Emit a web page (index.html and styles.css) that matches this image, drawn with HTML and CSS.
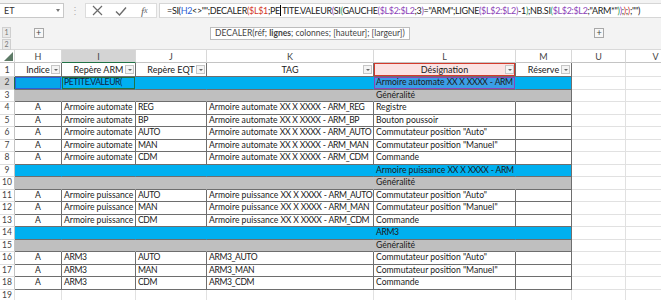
FILE: index.html
```html
<!DOCTYPE html>
<html lang="fr">
<head>
    <meta charset="UTF-8">
    <meta name="viewport" content="width=device-width, initial-scale=1.0">
    <title>Classeur</title>
    <link rel="stylesheet" href="styles.css">
</head>
<body>
    <div class="bar">
        <div class="namebox"><span>ET</span><span class="caret"></span></div>
        <div class="grip">⋮</div>
        <div class="fbtns">
            <span class="fbtn"><svg width="11" height="11" viewBox="0 0 11 11"><path d="M1 1L10 10M10 1L1 10" stroke="#6b6b6b" stroke-width="1.2" fill="none"/></svg></span>
            <span class="fbtn"><svg width="12" height="10" viewBox="0 0 12 10"><path d="M1 5.5L4.5 9L11 1.5" stroke="#6b6b6b" stroke-width="1.4" fill="none"/></svg></span>
            <span class="fbtn fx">f<small>x</small></span>
        </div>
        <div class="formula">=SI(<span class="r1">H2</span>&lt;&gt;"";DECALER<span class="p2">(</span><span class="r2">$L$1</span>;PE<span class="cursor"></span>TITE.VALEUR<span class="p3">(</span>SI<span class="p4">(</span>GAUCHE<span class="p3">(</span><span class="r3">$L$2:$L2</span>;3<span class="p3">)</span>="ARM";LIGNE<span class="p3">(</span><span class="r3">$L$2:$L2</span><span class="p3">)</span>-1<span class="p4">)</span>;NB.SI<span class="p4">(</span><span class="r3">$L$2:$L2</span>;"ARM*"<span class="p4">)</span><span class="p3">)</span>;<span class="p2">)</span>;<span class="p2">)</span>;"")</div>
    </div>

    <div class="outline">
        <div class="levels"><span class="lvl">1</span><span class="lvl">2</span></div>
        <div class="grp wh"><span class="plus">+</span></div>
        <div class="grp gap"></div>
        <div class="grp wu"><span class="plus">+</span></div>
        <div class="tip">DECALER(réf; <b>lignes</b>; colonnes; [hauteur]; [largeur])</div>
    </div>

    <table class="sheet">
        <colgroup>
            <col class="c-row"><col class="c-h"><col class="c-i"><col class="c-j"><col class="c-k"><col class="c-l"><col class="c-m"><col class="c-u"><col class="c-v">
        </colgroup>
        <thead>
            <tr>
                <th class="corner"><svg width="9" height="9" viewBox="0 0 9 9"><path d="M9 0V9H0Z" fill="#5d7a66"/></svg></th>
                <th>H</th><th class="sel">I</th><th>J</th><th>K</th><th>L</th><th>M</th><th>U</th><th>V</th>
            </tr>
        </thead>
        <tbody>
            <tr class="head">
                <td class="rh">1</td>
                <td><div class="hd"><span>Indice</span><i class="dd"></i></div></td>
                <td><div class="hd"><span>Repère ARM</span><i class="dd"></i></div></td>
                <td><div class="hd"><span>Repère EQT</span><i class="dd"></i></div></td>
                <td><div class="hd"><span>TAG</span><i class="dd"></i></div></td>
                <td class="ref-red"><div class="hd"><span>Désignation</span><i class="dd"></i></div></td>
                <td class="last"><div class="hd"><span>Réserve</span><i class="dd"></i></div></td>
                <td class="g"></td><td class="g"></td>
            </tr>
            <tr class="blue">
                <td class="rh sel">2</td>
                <td class="ref-blue"></td>
                <td class="active"><span class="cap">PETITE.VALEUR(</span></td>
                <td></td><td></td>
                <td class="ref-purple">Armoire automate <span class="cap">XX X XXXX - ARM</span></td>
                <td class="last"></td>
                <td class="g"></td><td class="g"></td>
            </tr>
            <tr class="grey">
                <td class="rh">3</td>
                <td></td><td></td><td></td><td></td><td>Généralité</td><td class="last"></td>
                <td class="g"></td><td class="g"></td>
            </tr>
            <tr class="data">
                <td class="rh">4</td>
                <td class="ctr">A</td><td>Armoire automate</td><td><span class="cap">REG</span></td><td>Armoire automate <span class="cap">XX X XXXX - ARM_REG</span></td><td>Registre</td><td></td>
                <td class="g"></td><td class="g"></td>
            </tr>
            <tr class="data">
                <td class="rh">5</td>
                <td class="ctr">A</td><td>Armoire automate</td><td><span class="cap">BP</span></td><td>Armoire automate <span class="cap">XX X XXXX - ARM_BP</span></td><td>Bouton poussoir</td><td></td>
                <td class="g"></td><td class="g"></td>
            </tr>
            <tr class="data">
                <td class="rh">6</td>
                <td class="ctr">A</td><td>Armoire automate</td><td><span class="cap">AUTO</span></td><td>Armoire automate <span class="cap">XX X XXXX - ARM_AUTO</span></td><td>Commutateur position "Auto"</td><td></td>
                <td class="g"></td><td class="g"></td>
            </tr>
            <tr class="data">
                <td class="rh">7</td>
                <td class="ctr">A</td><td>Armoire automate</td><td><span class="cap">MAN</span></td><td>Armoire automate <span class="cap">XX X XXXX - ARM_MAN</span></td><td>Commutateur position "Manuel"</td><td></td>
                <td class="g"></td><td class="g"></td>
            </tr>
            <tr class="data">
                <td class="rh">8</td>
                <td class="ctr">A</td><td>Armoire automate</td><td><span class="cap">CDM</span></td><td>Armoire automate <span class="cap">XX X XXXX - ARM_CDM</span></td><td>Commande</td><td></td>
                <td class="g"></td><td class="g"></td>
            </tr>
            <tr class="blue">
                <td class="rh">9</td>
                <td></td><td></td><td></td><td></td><td>Armoire puissance <span class="cap">XX X XXXX - ARM</span></td><td class="last"></td>
                <td class="g"></td><td class="g"></td>
            </tr>
            <tr class="grey">
                <td class="rh">10</td>
                <td></td><td></td><td></td><td></td><td>Généralité</td><td class="last"></td>
                <td class="g"></td><td class="g"></td>
            </tr>
            <tr class="data">
                <td class="rh">11</td>
                <td class="ctr">A</td><td>Armoire puissance</td><td><span class="cap">AUTO</span></td><td>Armoire puissance <span class="cap">XX X XXXX - ARM_AUTO</span></td><td>Commutateur position "Auto"</td><td></td>
                <td class="g"></td><td class="g"></td>
            </tr>
            <tr class="data">
                <td class="rh">12</td>
                <td class="ctr">A</td><td>Armoire puissance</td><td><span class="cap">MAN</span></td><td>Armoire puissance <span class="cap">XX X XXXX - ARM_MAN</span></td><td>Commutateur position "Manuel"</td><td></td>
                <td class="g"></td><td class="g"></td>
            </tr>
            <tr class="data">
                <td class="rh">13</td>
                <td class="ctr">A</td><td>Armoire puissance</td><td><span class="cap">CDM</span></td><td>Armoire puissance <span class="cap">XX X XXXX - ARM_CDM</span></td><td>Commande</td><td></td>
                <td class="g"></td><td class="g"></td>
            </tr>
            <tr class="blue">
                <td class="rh">14</td>
                <td></td><td></td><td></td><td></td><td><span class="cap">ARM3</span></td><td class="last"></td>
                <td class="g"></td><td class="g"></td>
            </tr>
            <tr class="grey">
                <td class="rh">15</td>
                <td></td><td></td><td></td><td></td><td>Généralité</td><td class="last"></td>
                <td class="g"></td><td class="g"></td>
            </tr>
            <tr class="data">
                <td class="rh">16</td>
                <td class="ctr">A</td><td><span class="cap">ARM3</span></td><td><span class="cap">AUTO</span></td><td><span class="cap">ARM3_AUTO</span></td><td>Commutateur position "Auto"</td><td></td>
                <td class="g"></td><td class="g"></td>
            </tr>
            <tr class="data">
                <td class="rh">17</td>
                <td class="ctr">A</td><td><span class="cap">ARM3</span></td><td><span class="cap">MAN</span></td><td><span class="cap">ARM3_MAN</span></td><td>Commutateur position "Manuel"</td><td></td>
                <td class="g"></td><td class="g"></td>
            </tr>
            <tr class="data">
                <td class="rh">18</td>
                <td class="ctr">A</td><td><span class="cap">ARM3</span></td><td><span class="cap">CDM</span></td><td><span class="cap">ARM3_CDM</span></td><td>Commande</td><td></td>
                <td class="g"></td><td class="g"></td>
            </tr>
            <tr class="empty">
                <td class="rh">19</td>
                <td></td><td></td><td></td><td></td><td></td><td></td><td></td><td></td>
            </tr>
        </tbody>
    </table>
</body>
</html>
```

FILE: styles.css
```css
*{
    margin: 0;
    padding: 0;
    box-sizing: border-box;
}
body{
    width: 661px;
    height: 300px;
    overflow: hidden;
    background: #fff;
    font-family: Lato, "Liberation Sans", sans-serif;
    color: #1a1a1a;
}

/* formula bar */
.bar{
    display: flex;
    align-items: flex-start;
    height: 22px;
    padding-top: 3px;
    background: #f3f3f3;
}
.namebox{
    display: flex;
    align-items: center;
    justify-content: space-between;
    width: 64px;
    height: 15px;
    padding: 0 3px 0 4px;
    background: #fff;
    border: 1px solid #c8c8c8;
    border-left: none;
    font-size: 9px;
    color: #333;
}
.caret{
    border-left: 2.5px solid transparent;
    border-right: 2.5px solid transparent;
    border-top: 3px solid #777;
}
.grip{
    width: 21px;
    height: 15px;
    text-align: center;
    font-size: 10px;
    line-height: 15px;
    color: #b0b0b0;
}
.fbtns{
    display: flex;
    width: 72px;
    height: 15px;
    background: #fff;
    border: 1px solid #dcdcdc;
}
.fbtn{
    display: flex;
    align-items: center;
    justify-content: center;
    width: 24px;
}
.fx{
    font-family: "Liberation Serif", serif;
    font-style: italic;
    font-size: 11px;
    color: #666;
}
.fx small{
    font-size: 8px;
}
.formula{
    flex: 1;
    height: 15px;
    margin-left: 2px;
    padding-left: 7px;
    background: #fff;
    border: 1px solid #d6d6d6;
    border-right: none;
    font-size: 9px;
    letter-spacing: -.34px;
    line-height: 13px;
    white-space: nowrap;
    overflow: hidden;
    color: #222;
}
.r1{ color: #2b5fd6; }
.r2{ color: #d33a2c; }
.r3{ color: #8c44b8; }
.p2{ color: #d33a2c; }
.p3{ color: #8c44b8; }
.p4{ color: #2f9a55; }
.cursor{
    display: inline-block;
    width: 1px;
    height: 11px;
    margin: 0 .5px;
    vertical-align: -2px;
    background: #000;
}

/* outline strip */
.outline{
    position: relative;
    display: flex;
    height: 28px;
    background: #f3f3f3;
    border-bottom: 1px solid #d9d9d9;
}
.levels{
    display: flex;
    flex-direction: column;
    width: 15px;
    padding: 5px 0 0 2px;
}
.lvl{
    width: 9px;
    height: 11px;
    margin-bottom: 1px;
    background: #e9e9e9;
    border: 1px solid #cfcfcf;
    font-size: 7px;
    line-height: 9px;
    text-align: center;
    color: #777;
}
.grp{
    display: flex;
    justify-content: center;
    padding-top: 6px;
}
.wh{ width: 47px; }
.gap{ width: 510px; }
.wu{ width: 54px; }
.plus{
    width: 10px;
    height: 10px;
    background: #f7f7f7;
    border: 1px solid #a8a8a8;
    font-size: 9px;
    line-height: 8px;
    text-align: center;
    color: #444;
}
.tip{
    position: absolute;
    left: 210px;
    top: 5px;
    height: 13px;
    padding: 0 4px;
    background: #fff;
    border: 1px solid #bdbdbd;
    font-size: 8.5px;
    line-height: 11px;
    color: #444;
    white-space: nowrap;
}

/* grid */
.sheet{
    width: 686px;
    table-layout: fixed;
    border-collapse: separate;
    border-spacing: 0;
    font-size: 8.6px;
}
.c-row{ width: 15px; }
.c-h{ width: 47px; }
.c-i{ width: 74px; }
.c-j{ width: 71px; }
.c-k{ width: 167px; }
.c-l{ width: 142px; }
.c-m{ width: 56px; }
.c-u{ width: 54px; }
.c-v{ width: 60px; }
th{
    height: 13px;
    font-weight: normal;
    font-size: 9px;
    color: #444;
    background: #fff;
    border-right: 1px solid #d8d8d8;
    border-bottom: 1px solid #c4c4c4;
}
th.sel{
    background: #d4d4d4;
    border-bottom: 1px solid #217346;
}
.corner{
    text-align: right;
    vertical-align: bottom;
    line-height: 0;
    padding: 0 1px 1px 0;
}
tr{
    height: 12.5px;
}
tr.head{
    height: 14px;
}
td{
    padding: 0 2px;
    line-height: 11px;
    white-space: nowrap;
    overflow: hidden;
    border-right: 1px solid #6e6e6e;
    border-bottom: 1px solid #6e6e6e;
}
.cap{
    letter-spacing: -.4px;
    word-spacing: .5px;
}
td.rh{
    padding: 0;
    text-align: center;
    font-size: 8.5px;
    color: #444;
    border-right: 1px solid #c4c4c4;
    border-bottom: 1px solid #dcdcdc;
}
td.rh.sel{
    background: #d4d4d4;
    border-right: 1px solid #217346;
}
td.g,
.empty td{
    border-right: 1px solid #e1e1e1;
    border-bottom: 1px solid #e1e1e1;
}
.ctr{
    text-align: center;
}
.hd{
    display: grid;
    grid-template-columns: 10px 1fr 10px;
    align-items: center;
}
.hd span{
    grid-column: 2;
    text-align: center;
    overflow: hidden;
}
.dd{
    grid-column: 3;
    justify-self: end;
    width: 9px;
    height: 9px;
    background: #f4f4f4;
    border: 1px solid #c6c6c6;
    position: relative;
}
.dd::after{
    content: "";
    position: absolute;
    left: 2px;
    top: 3px;
    border-left: 2px solid transparent;
    border-right: 2px solid transparent;
    border-top: 2px solid #666;
}
.head td{
    padding: 0 1px;
    font-size: 9px;
}
.blue td{
    background: #00b0f0;
    border-right-color: #00b0f0;
}
.grey td{
    background: #bfbfbf;
    border-right-color: #bfbfbf;
}
.blue td.rh,
.grey td.rh{
    background: #fff;
    border-right-color: #c4c4c4;
}
.blue td.rh.sel{
    background: #d4d4d4;
    border-right-color: #217346;
}
.blue td.last,
.grey td.last{
    border-right-color: #6e6e6e;
}
.blue td.g,
.grey td.g{
    background: #fff;
    border-right-color: #e1e1e1;
}
.ref-red{
    background: #fbe3e3;
    box-shadow: inset 0 0 0 1px #d33a2c;
}
.blue td.ref-blue{
    background: #05a6ea;
    box-shadow: inset 0 0 0 1px #2b5fd6;
}
.blue td.active{
    color: #10253f;
    box-shadow: inset 0 0 0 1px #217346;
}
.blue td.ref-purple{
    background: #3a9ee6;
    box-shadow: inset 0 0 0 1px #8c44b8;
}
```
